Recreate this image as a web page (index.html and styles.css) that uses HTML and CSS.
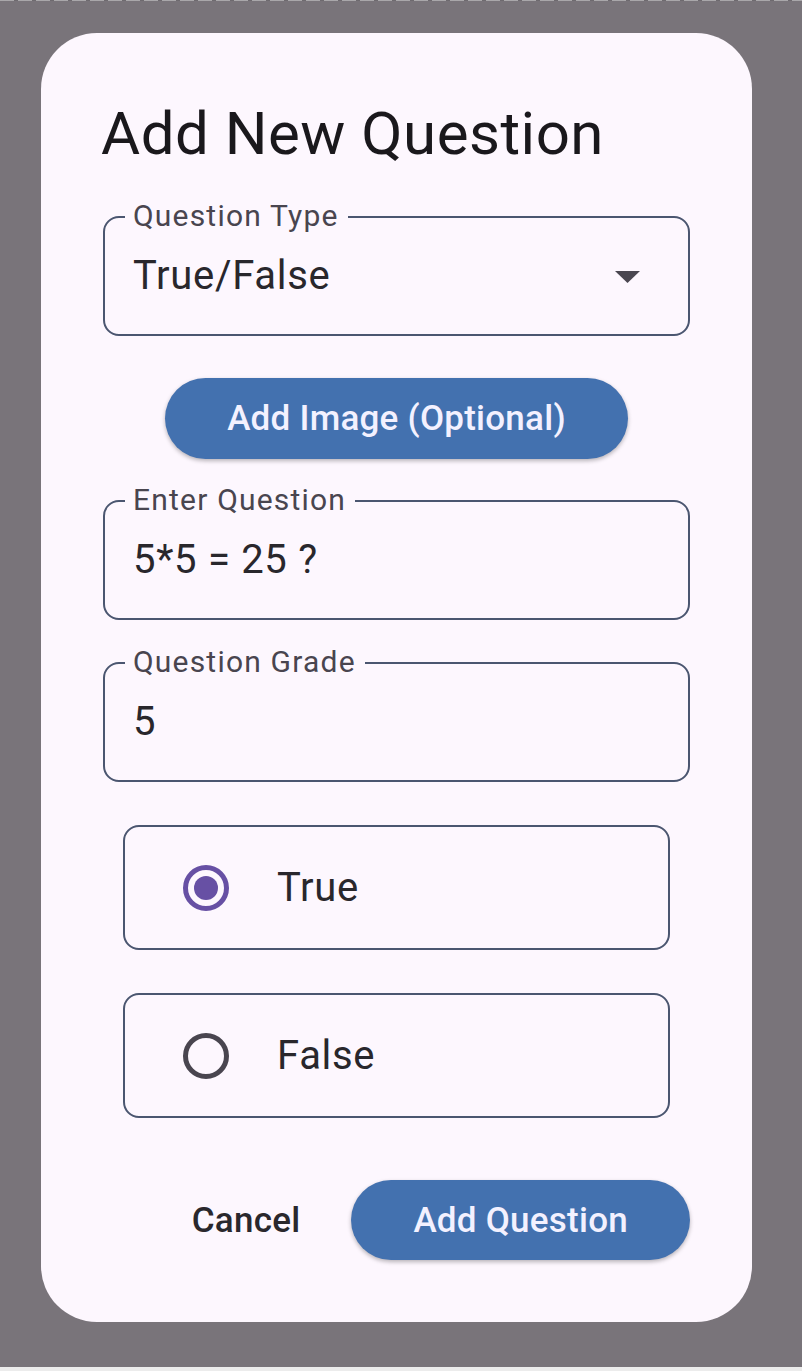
FILE: index.html
```html
<!DOCTYPE html>
<html lang="en">
<head>
<meta charset="utf-8">
<title>Add New Question</title>
<link rel="stylesheet" href="styles.css">
</head>
<body>
<div class="screen">
  <div class="topline"></div>
  <div class="dialog">
    <h1 class="title">Add New Question</h1>

    <div class="field">
      <span class="field-label">Question Type</span>
      <span class="field-value">True/False</span>
      <svg class="caret" width="25" height="12" viewBox="0 0 25 12"><path d="M0 0 L25 0 L12.5 12 Z" fill="#4a4650"/></svg>
    </div>

    <div class="center-row">
      <button class="pill">Add Image (Optional)</button>
    </div>

    <div class="field">
      <span class="field-label">Enter Question</span>
      <span class="field-value">5*5 = 25 ?</span>
    </div>

    <div class="field">
      <span class="field-label">Question Grade</span>
      <span class="field-value">5</span>
    </div>

    <div class="option">
      <span class="radio selected"><span class="dot"></span></span>
      <span class="option-text">True</span>
    </div>

    <div class="option">
      <span class="radio"></span>
      <span class="option-text">False</span>
    </div>

    <div class="actions">
      <button class="text-btn">Cancel</button>
      <button class="pill pill-action">Add Question</button>
    </div>
  </div>
</div>
</body>
</html>
```

FILE: styles.css
```css
* { box-sizing: border-box; }

html, body {
  margin: 0;
  padding: 0;
  background: #ececec;
  font-family: Roboto, "Liberation Sans", sans-serif;
}

.screen {
  height: 1367px;
  background: #79747a;
  overflow: hidden;
}

.topline {
  height: 1px;
  background: repeating-linear-gradient(90deg, #a9a7aa 0 14px, #6e6a6f 14px 18px);
}

.dialog {
  margin: 32px 0 0 41px;
  width: 711px;
  height: 1289px;
  background: #fdf7fe;
  border-radius: 56px;
  padding: 65px 62px 0 62px;
  display: flex;
  flex-direction: column;
}

.title {
  margin: 0 0 46px -2px;
  font-size: 60px;
  line-height: 72px;
  font-weight: 400;
  color: #1a181c;
  letter-spacing: 0.5px;
}

.field {
  position: relative;
  height: 120px;
  border: 2px solid #4b5670;
  border-radius: 16px;
  display: flex;
  align-items: center;
  padding: 0 28px;
  margin-bottom: 42px;
}

.field-label {
  position: absolute;
  top: -20px;
  left: 20px;
  padding: 0 9px 0 8px;
  background: #fdf7fe;
  font-size: 30px;
  line-height: 36px;
  color: #49454f;
  letter-spacing: 1.2px;
}

.field-value {
  font-size: 40px;
  line-height: 48px;
  color: #29272c;
  letter-spacing: 0.7px;
  flex: 1;
}

.caret {
  margin-right: 20px;
  margin-top: 2px;
}

.center-row {
  display: flex;
  justify-content: center;
  margin-bottom: 41px;
}

.pill {
  height: 81px;
  border: none;
  border-radius: 41px;
  background: #4371af;
  color: #f3f1ff;
  font-family: Roboto, "Liberation Sans", sans-serif;
  font-size: 35px;
  font-weight: 500;
  letter-spacing: 0.25px;
  padding: 0 62px;
  box-shadow: 0 2px 4px rgba(0, 0, 0, 0.28);
  cursor: pointer;
}

.option {
  margin: 1px 20px 42px 20px;
  height: 125px;
  border: 2px solid #4b5670;
  border-radius: 16px;
  display: flex;
  align-items: center;
  padding-left: 58px;
}

.radio {
  width: 46px;
  height: 46px;
  border: 5px solid #49454f;
  border-radius: 50%;
  display: flex;
  align-items: center;
  justify-content: center;
  margin-right: 48px;
}

.radio.selected {
  border-color: #6750a4;
}

.dot {
  width: 24px;
  height: 24px;
  border-radius: 50%;
  background: #6750a4;
}

.option-text {
  font-size: 40px;
  line-height: 48px;
  color: #29272c;
  letter-spacing: 0.7px;
}

.actions {
  margin-top: 20px;
  display: flex;
  justify-content: flex-end;
  align-items: center;
  gap: 21px;
}

.text-btn {
  height: 80px;
  border: none;
  background: transparent;
  font-family: Roboto, "Liberation Sans", sans-serif;
  font-size: 35px;
  font-weight: 500;
  letter-spacing: 0.25px;
  color: #2a282d;
  padding: 0 30px;
}

.pill-action {
  height: 80px;
  border-radius: 40px;
}
```
